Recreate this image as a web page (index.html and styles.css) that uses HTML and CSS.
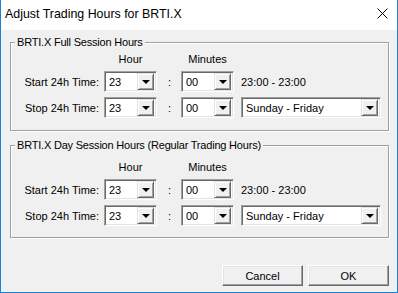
FILE: index.html
```html
<!DOCTYPE html>
<html lang="en">
<head>
    <meta charset="UTF-8">
    <title>Adjust Trading Hours for BRTI.X</title>
    <link rel="stylesheet" href="styles.css">
</head>
<body>
    <div class="window">
        <div class="titlebar">
            <span class="title">Adjust Trading Hours for BRTI.X</span>
            <svg class="close" width="11" height="11" viewBox="0 0 11 11">
                <path d="M0.5 0.5 L10.5 10.5 M10.5 0.5 L0.5 10.5" stroke="#000" stroke-width="1" fill="none"/>
            </svg>
        </div>

        <div class="content">
            <div class="group group-full">
                <span class="group-title">BRTI.X Full Session Hours</span>
                <div class="grid">
                    <span></span>
                    <span class="head">Hour</span>
                    <span></span>
                    <span class="head">Minutes</span>
                    <span></span>

                    <span class="label">Start 24h Time:</span>
                    <div class="combo"><span class="val">23</span><span class="btn"></span></div>
                    <span class="colon">:</span>
                    <div class="combo"><span class="val">00</span><span class="btn"></span></div>
                    <span class="range">23:00 - 23:00</span>

                    <span class="label">Stop 24h Time:</span>
                    <div class="combo"><span class="val">23</span><span class="btn"></span></div>
                    <span class="colon">:</span>
                    <div class="combo"><span class="val">00</span><span class="btn"></span></div>
                    <div class="combo wide"><span class="val">Sunday - Friday</span><span class="btn"></span></div>
                </div>
            </div>

            <div class="group group-day">
                <span class="group-title">BRTI.X Day Session Hours (Regular Trading Hours)</span>
                <div class="grid">
                    <span></span>
                    <span class="head">Hour</span>
                    <span></span>
                    <span class="head">Minutes</span>
                    <span></span>

                    <span class="label">Start 24h Time:</span>
                    <div class="combo"><span class="val">23</span><span class="btn"></span></div>
                    <span class="colon">:</span>
                    <div class="combo"><span class="val">00</span><span class="btn"></span></div>
                    <span class="range">23:00 - 23:00</span>

                    <span class="label">Stop 24h Time:</span>
                    <div class="combo"><span class="val">23</span><span class="btn"></span></div>
                    <span class="colon">:</span>
                    <div class="combo"><span class="val">00</span><span class="btn"></span></div>
                    <div class="combo wide"><span class="val">Sunday - Friday</span><span class="btn"></span></div>
                </div>
            </div>

            <div class="buttons">
                <button class="push">Cancel</button>
                <button class="push">OK</button>
            </div>
        </div>
    </div>
</body>
</html>
```

FILE: styles.css
```css
body {
    margin: 0;
    padding: 0;
    font-family: "Liberation Sans", Arial, sans-serif;
    font-size: 11px;
    color: #000;
    background: #fff;
}

.window {
    box-sizing: border-box;
    width: 398px;
    height: 293px;
    border: 1px solid #1883d7;
    border-top: none;
    display: flex;
    flex-direction: column;
    background: #f0f0f0;
}

.titlebar {
    height: 30px;
    background: #fff;
    display: flex;
    align-items: center;
    justify-content: space-between;
    padding: 0 9px 0 4px;
}

.title {
    font-size: 12.4px;
    margin-top: -3px;
}

.close {
    margin-top: -4px;
}

.content {
    flex: 1;
    display: flex;
    flex-direction: column;
    padding: 0 8px 0 9px;
}

/* etched group box */
.group {
    position: relative;
    border: 1px solid #a0a0a0;
    box-shadow: inset 1px 1px 0 #fff, 1px 1px 0 #fff;
}

.group-full {
    margin-top: 12px;
    height: 89px;
    box-sizing: border-box;
    padding-top: 10px;
}

.group-day {
    margin-top: 14px;
    height: 93px;
    box-sizing: border-box;
    padding-top: 15px;
}

.group-title {
    position: absolute;
    top: -7px;
    left: 4px;
    padding: 0 2px;
    line-height: 13px;
    letter-spacing: -0.2px;
    background: #f0f0f0;
}

.grid {
    display: grid;
    grid-template-columns: 93px 53px 24px 53px auto;
    grid-template-rows: 13px 21px 21px;
    row-gap: 5px;
    align-items: center;
}

.head {
    text-align: center;
    line-height: 13px;
    margin-top: -1px;
}

.label {
    text-align: right;
    padding-right: 5px;
}

.colon {
    text-align: center;
    padding-left: 1px;
}

.range {
    margin-left: 7px;
}

/* sunken combo box */
.combo {
    box-sizing: border-box;
    height: 21px;
    display: flex;
    align-items: center;
    background: #fff;
    border: 1px solid;
    border-color: #a0a0a0 #fff #fff #a0a0a0;
    box-shadow: inset 1px 1px 0 #696969, inset -1px -1px 0 #e3e3e3;
    padding: 2px;
}

.combo .val {
    flex: 1;
    padding-left: 2px;
}

.combo.wide {
    margin-left: 7px;
    width: 140px;
}

.btn {
    box-sizing: border-box;
    width: 17px;
    height: 17px;
    background: #f0f0f0;
    border: 1px solid;
    border-color: #e3e3e3 #696969 #696969 #e3e3e3;
    box-shadow: inset 1px 1px 0 #fff, inset -1px -1px 0 #a0a0a0;
    display: flex;
    align-items: center;
    justify-content: center;
}

.btn::after {
    content: "";
    border-left: 4px solid transparent;
    border-right: 4px solid transparent;
    border-top: 4px solid #000;
    margin-top: 1px;
}

.buttons {
    display: flex;
    justify-content: flex-end;
    gap: 5px;
    margin-top: 27px;
}

.push {
    box-sizing: border-box;
    width: 81px;
    height: 21px;
    padding: 0;
    font-family: "Liberation Sans", Arial, sans-serif;
    font-size: 11px;
    color: #000;
    background: #f0f0f0;
    border: 1px solid;
    border-color: #fff #696969 #696969 #fff;
    box-shadow: inset -1px -1px 0 #a0a0a0, inset 1px 1px 0 #e3e3e3;
}
```
